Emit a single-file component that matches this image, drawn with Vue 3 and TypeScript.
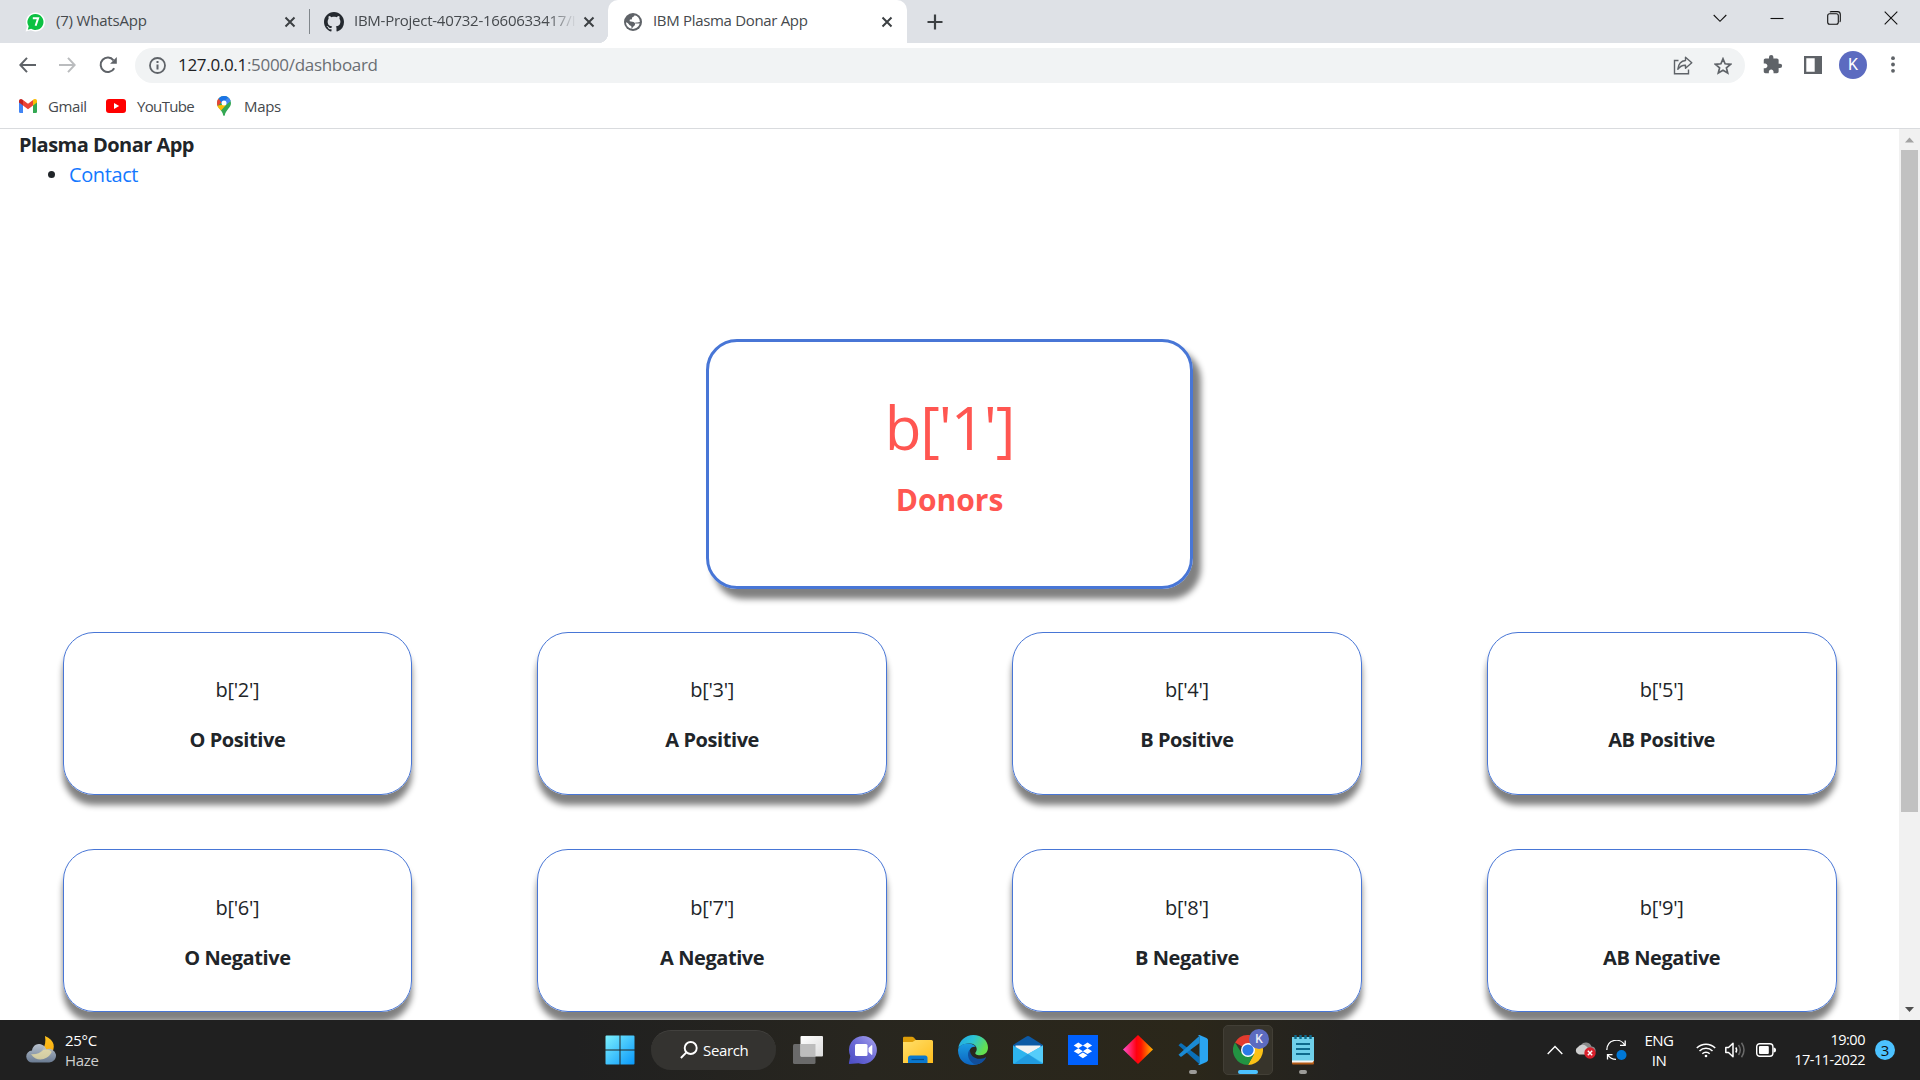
<script setup lang="ts">
interface Group { count: string; label: string }

const groups: Group[] = [
  { count: "b['2']", label: 'O Positive' },
  { count: "b['3']", label: 'A Positive' },
  { count: "b['4']", label: 'B Positive' },
  { count: "b['5']", label: 'AB Positive' },
  { count: "b['6']", label: 'O Negative' },
  { count: "b['7']", label: 'A Negative' },
  { count: "b['8']", label: 'B Negative' },
  { count: "b['9']", label: 'AB Negative' },
]
</script>

<template>
  <div class="screen">
    <header class="tabs">
      <div class="tab tab-a">
        <svg class="fav" width="20" height="20" viewBox="0 0 20 20">
          <path d="M10.5.5a9.5 9.5 0 1 1-4.6 17.8L.6 19.6 2 14.5A9.5 9.5 0 0 1 10.5.5z" fill="#fff" />
          <path d="M10.5 2a8 8 0 1 1-4.4 14.7L2.8 17.700 3.700 14.300A8 8 0 0 1 10.500 2z" fill="#0cc143" />
          <path d="M7.800 6.300h5.300L10.600 13.700" fill="none" stroke="#fff" stroke-width="2" />
        </svg>
        <span class="title">(7) WhatsApp</span>
        <svg class="x" width="12" height="12" viewBox="0 0 12 12"><path d="M1.500 1.500l9 9M10.500 1.500l-9 9" /></svg>
      </div>
      <div class="tab tab-b">
        <svg class="fav" width="20" height="20" viewBox="0 0 16 16">
          <path fill="#24292f" d="M8 0C3.580 0 0 3.580 0 8c0 3.540 2.290 6.530 5.470 7.590.4.070.550-.170.550-.380 0-.190-.010-.820-.010-1.490-2.010.370-2.530-.490-2.690-.940-.090-.230-.480-.940-.820-1.130-.280-.150-.680-.520-.010-.530.630-.010 1.080.580 1.230.820.720 1.210 1.870.870 2.330.660.070-.520.280-.870.510-1.070-1.780-.200-3.640-.890-3.640-3.950 0-.870.310-1.590.820-2.150-.080-.200-.360-1.020.080-2.120 0 0 .670-.210 2.200.820.640-.180 1.320-.270 2-.270s1.360.090 2 .270c1.530-1.040 2.200-.820 2.200-.820.440 1.100.160 1.920.080 2.120.510.560.820 1.270.820 2.150 0 3.070-1.870 3.750-3.650 3.950.290.250.540.730.540 1.480 0 1.070-.010 1.930-.010 2.200 0 .210.150.460.550.380A8.010 8.010 0 0 0 16 8c0-4.420-3.580-8-8-8z" />
        </svg>
        <span class="title fade">IBM-Project-40732-1660633417/I</span>
        <svg class="x" width="12" height="12" viewBox="0 0 12 12"><path d="M1.500 1.500l9 9M10.500 1.500l-9 9" /></svg>
      </div>
      <div class="tab tab-c">
        <svg class="fav" width="18" height="18" viewBox="0 0 18 18">
          <circle cx="9" cy="9" r="9" fill="#5f6368" />
          <path d="M10.500 2.300C10.800 3.800 8 3.600 8 5.200c0 1.300-.9 1.300-2.300 1.500v1.500c1.500.5 3.900 0 4.900 1.500.6 1 1.500.9 2.500.9h2.700A7 7 0 0 1 7.500 15.700V14c0-.9-.6-1.200-1.400-1.500C5 12 4.700 10.300 2.100 9.300v1.200c.3 2.500 2.400 4.700 5.400 5.300C9 15.500 8 14 9.800 13.200c1.300-.6 1.500-2.200 1-3.200C12 9 14.200 9.800 15.900 9 15.800 5.600 13.700 3 10.500 2.300z" fill="#fff" />
        </svg>
        <span class="title">IBM Plasma Donar App</span>
        <svg class="x" width="12" height="12" viewBox="0 0 12 12"><path d="M1.500 1.500l9 9M10.500 1.500l-9 9" /></svg>
      </div>
      <svg class="plus" width="16" height="16" viewBox="0 0 16 16"><path d="M8 .500v15M.500 8h15" stroke="#3c4043" stroke-width="2.200" /></svg>
      <div class="controls">
        <svg width="14" height="14" viewBox="0 0 14 14"><path d="M.700 4l6.300 6.300L13.300 4" /></svg>
        <svg width="14" height="14" viewBox="0 0 14 14"><path d="M.500 7.500h13" /></svg>
        <svg width="14" height="14" viewBox="0 0 14 14"><rect x=".700" y="2.700" width="10.600" height="10.600" rx="2" /><path d="M3 1.200Q3.300.600 4.500.600H10.500Q13.300.600 13.300 3.500V9.500Q13.300 10.700 12.700 11" /></svg>
        <svg width="14" height="14" viewBox="0 0 14 14"><path d="M.700.700l12.600 12.600M13.300.700L.700 13.300" /></svg>
      </div>
    </header>

    <div class="toolbar">
      <svg class="nav back" width="17" height="16" viewBox="0 0 17 16"><path d="M8 .900L1.300 8 8 15.100M1.500 8H17" /></svg>
      <svg class="nav fwd" width="17" height="16" viewBox="0 0 17 16"><path d="M9 .900L15.700 8 9 15.100M15.500 8H0" /></svg>
      <svg class="nav reload" width="18" height="18" viewBox="0 0 18 18"><path d="M15.200 12.200A7.200 7.200 0 1 1 14.500 4.300" /><path d="M17.800 1v6.700h-6.700z" fill="#5f6368" stroke="none" /></svg>
      <div class="omnibox">
        <svg width="17" height="17" viewBox="0 0 17 17"><circle cx="8.500" cy="8.500" r="7.500" fill="none" stroke="#5f6368" stroke-width="1.800" /><path d="M8.500 4v2M8.500 7.500v5" stroke="#5f6368" stroke-width="2" /></svg>
        <span class="url">127.0.0.1<i>:5000/dashboard</i></span>
        <svg class="share" width="20" height="19" viewBox="0 0 20 19" fill="none" stroke="#5f6368" stroke-width="1.400"><path d="M5.500 4.500H1.500V17.800H15.500V13.500" /><path d="M12.500 1.300L18.800 6.700 12.500 12.200V9.200C9.300 9 7 10.200 4.800 13.300 5.300 8.800 7.600 5 12.500 4.500z" stroke-linejoin="round" /></svg>
        <svg class="star" width="18" height="18" viewBox="0 0 18 18"><path d="M9 1.800l2.100 5 5.400.500-4.100 3.500 1.300 5.300L9 13.300l-4.700 2.800 1.300-5.300L1.500 7.300l5.400-.500z" fill="none" stroke="#5f6368" stroke-width="1.700" /></svg>
      </div>
      <svg class="ext" width="21" height="21" viewBox="0 0 24 24"><path fill="#5f6368" d="M20.500 11H19V7c0-1.100-.9-2-2-2h-4V3.500a2.500 2.500 0 0 0-5 0V5H4c-1.100 0-1.990.9-1.990 2v3.800H3.500c1.490 0 2.700 1.210 2.700 2.700s-1.210 2.700-2.700 2.700H2V20c0 1.100.9 2 2 2h3.800v-1.500c0-1.490 1.210-2.700 2.700-2.700s2.700 1.210 2.700 2.700V22H17c1.100 0 2-.9 2-2v-4h1.500a2.500 2.500 0 0 0 0-5z" /></svg>
      <svg class="panel" width="18" height="18" viewBox="0 0 18 18"><path fill="#5f6368" fill-rule="evenodd" d="M0 0h18v18H0zM2.300 2.300v13.400h8.400V2.300z" /></svg>
      <span class="avatar">K</span>
      <svg class="dots" width="4" height="17" viewBox="0 0 4 17" fill="#5f6368"><circle cx="2" cy="2.200" r="1.900" /><circle cx="2" cy="8.500" r="1.900" /><circle cx="2" cy="14.800" r="1.900" /></svg>
    </div>

    <div class="bookmarks">
      <svg width="18" height="14" viewBox="0 0 18 14"><path d="M0 2v10.700Q0 14 1.300 14H4V6z" fill="#4285f4" /><path d="M18 2v10.700Q18 14 16.700 14H14V6z" fill="#34a853" /><path d="M14 1.200V6.500L18 3.500V2C18 0 15.800-.700 14 .800z" fill="#fbbc04" /><path d="M4 6.500V.900L9 4.800 14 .900V6.500L9 10.300z" fill="#ea4335" /><path d="M0 2v1.500L4 6.500V.900C2-.700 0 .200 0 2z" fill="#c5221f" /></svg>
      <span class="gmail">Gmail</span>
      <svg class="yt" width="20" height="14" viewBox="0 0 20 14"><rect width="20" height="14" rx="3" fill="#f00" /><path d="M8 4v6l5.200-3z" fill="#fff" /></svg>
      <span class="youtube">YouTube</span>
      <svg class="mp" width="14" height="20" viewBox="0 0 14 20">
        <path d="M7 0a7 7 0 0 1 7 7c0 5-5.200 6.500-6.200 12.300q-.8 1.400-1.600 0C5.300 13.500 0 12 0 7a7 7 0 0 1 7-7z" fill="#34a853" />
        <path d="M.200 9.500L9.500 8.500 4 14.500C2.300 12.700.600 11.300.200 9.500z" fill="#fbbc04" /><path d="M1.600 2.500L5 6 .600 10C-.300 7.500-.200 4.500 1.600 2.500z" fill="#ea4335" /><path d="M1.600 2.500C4-.500 8.500-.700 11.300 1.500L5 7.500z" fill="#1a73e8" /><path d="M11.300 1.500Q13 2.800 13.700 5L9 9 6.800 5.500z" fill="#4285f4" /><circle cx="7" cy="7" r="2.500" fill="#fff" />
      </svg>
      <span class="maps">Maps</span>
    </div>

    <div class="viewport">
      <main class="page">
        <div class="brand"><b>Plasma Donar App</b></div>
        <ul class="links"><li><a>Contact</a></li></ul>
        <section class="donors">
          <div class="big">b['1']</div>
          <b>Donors</b>
        </section>
        <section class="grid">
          <div v-for="g in groups" :key="g.label" class="cell">
            <div class="card"><p>{{ g.count }}</p><p><b>{{ g.label }}</b></p></div>
          </div>
        </section>
      </main>
      <div class="scroll">
        <svg width="21" height="21" viewBox="0 0 21 21"><path d="M6 13.500l4.500-5 4.500 5z" fill="#a3a3a3" /></svg>
        <div class="thumb"></div>
        <svg class="down" width="21" height="21" viewBox="0 0 21 21"><path d="M6 8l4.500 5L15 8z" fill="#505050" /></svg>
      </div>
    </div>

    <footer class="taskbar">
      <div class="weather">
        <svg width="30" height="28" viewBox="0 0 30 28">
          <defs><linearGradient id="cl" x1="0" y1="0" x2="0" y2="1"><stop offset="0" stop-color="#c3cedb" /><stop offset="1" stop-color="#71839c" /></linearGradient><linearGradient id="mn" x1="0" y1="0" x2="0" y2="1"><stop offset="0" stop-color="#ffc31e" /><stop offset="1" stop-color="#f5a30a" /></linearGradient></defs>
          <path d="M19 0c10 4 11 12 5.500 18.500C20 24 11 24 6 18c9 1 15-7 13-18z" fill="url(#mn)" />
          <path d="M6.500 26.500a6 6 0 0 1-.5-12 7 7 0 0 1 10.500-5.500c2 1 3.300 2.600 3.900 4.500A6.800 6.800 0 1 1 23 26.500z" fill="url(#cl)" opacity=".92" />
          <path d="M5 18c4 .800 9-.500 12.500-4.300 4.500-1 7.500.800 8 2.300C22 24.500 10 26.500 5 18z" fill="#efe2a4" opacity=".7" />
        </svg>
        <div class="two"><span>25°C</span><span class="haze">Haze</span></div>
      </div>
      <div class="apps">
        <span class="tile"><svg width="30" height="30" viewBox="0 0 30 30"><defs><linearGradient id="wn" x1="0" y1="0" x2="1" y2="1"><stop offset="0" stop-color="#7cf0fd" /><stop offset="1" stop-color="#0998fb" /></linearGradient></defs><path d="M.500 1.500q0-1 1-1H14.500v14H.500zM15.500.500h13q1 0 1 1v13h-14zM.500 15.500h14v14h-13q-1 0-1-1zM15.500 15.500h14v13q0 1-1 1h-13z" fill="url(#wn)" /></svg></span>
        <span class="search"><svg width="18" height="18" viewBox="0 0 18 18" fill="none" stroke="#fff" stroke-width="1.900"><circle cx="10.700" cy="7" r="6" /><path d="M6.400 11.300L.900 17" /></svg><span>Search</span></span>
        <span class="tile"><svg width="30" height="28" viewBox="0 0 30 28"><defs><linearGradient id="tv" x1="0" y1="0" x2="1" y2="1"><stop offset="0" stop-color="#fff" /><stop offset="1" stop-color="#dcdcdc" /></linearGradient></defs><rect y="8" width="22.500" height="20" rx="1.500" fill="#6a6a6a" /><rect x="7.500" width="22.500" height="20.500" rx="1" fill="url(#tv)" /><path d="M7.500 8h15v12.500h-15z" fill="#bdbdbd" /></svg></span>
        <span class="tile"><svg width="30" height="30" viewBox="0 0 30 30"><defs><linearGradient id="ch" x1="0" y1="1" x2="1" y2="0"><stop offset="0" stop-color="#4a4cc4" /><stop offset=".5" stop-color="#6d6bd6" /><stop offset="1" stop-color="#a9a4ef" /></linearGradient></defs><path d="M15 1a14 14 0 1 1-4.500 27.300L1.500 29q-.8 0-.6-1L2.300 21A14 14 0 0 1 15 1z" fill="url(#ch)" /><rect x="7" y="9" width="12.500" height="12" rx="1.500" fill="#fff" /><path d="M20.500 13l3-2.800q.8-.5.8.500v8.600q0 1-.8.500l-3-2.800z" fill="#fff" /></svg></span>
        <span class="tile"><svg width="30" height="28" viewBox="0 0 30 28"><defs><linearGradient id="fo" x1="0" y1="0" x2="1" y2="1"><stop offset="0" stop-color="#ffdf6b" /><stop offset="1" stop-color="#ffbd1c" /></linearGradient></defs><path d="M0 2Q0 .800 1.200.800H9q1 0 1.700.700L13 4v5H0z" fill="#dd9d08" /><path d="M0 6h9.500L12.500 4H28.500Q30 4 30 5.500V27H0z" fill="url(#fo)" /><path d="M5 27V22q0-2.500 2.500-2.500h14.500q2.500 0 2.500 2.500v5z" fill="#0a78cf" /><path d="M8.500 23.500h12.500" stroke="#064b86" stroke-width="1.200" /></svg></span>
        <span class="tile"><svg width="30" height="30" viewBox="0 0 30 30"><defs><linearGradient id="e1" x1="0" y1="0" x2="1" y2=".4"><stop offset="0" stop-color="#1fa5e6" /><stop offset=".5" stop-color="#2cc3d5" /><stop offset="1" stop-color="#64e04f" /></linearGradient><linearGradient id="e2" x1="0" y1="0" x2="0" y2="1"><stop offset="0" stop-color="#1b9de2" /><stop offset="1" stop-color="#0d64c0" /></linearGradient></defs><path d="M.300 13C1.500 5.500 7.500 0 15.300 0 24 0 30 5.800 30 12.500c0 5-3.500 7.700-7.800 7.700-4 0-5.900-1.500-4.500-3 2.500-3 .6-8.700-5.700-8.700C6.500 8.500 2 10.500.300 13z" fill="url(#e1)" /><path d="M0 15C.500 11 5 8.500 10 8.500c3.800 0 6.500 1.300 7.800 3.500-6.500-1.500-8 6.500-4.800 10.500 3 4 8 5.500 12.500 3.500C16.500 33.500 0 30.500 0 15z" fill="url(#e2)" /><path d="M12 14.500c-4 3.500-2 13.500 6.500 15.100 4.500-.8 7.700-3.500 9.400-6.600.3-.6-.1-1-.7-.6-7.800 4-15.700-.9-15.200-7.900z" fill="#114e9b" /></svg></span>
        <span class="tile"><svg width="30" height="28" viewBox="0 0 30 28"><path d="M0 9L13.500.500q1.500-.8 3 0L30 9v4H0z" fill="#0c59a4" /><path d="M2.500 9.500h25V16L15 24 2.500 16z" fill="#f2f2f2" /><path d="M0 9.500L15 18 30 9.500V27q0 1-1 1H1q-1 0-1-1z" fill="#2db4ee" /><path d="M30 9.500V27L15 18z" fill="#55cdfa" /><path d="M.500 28L15 18l14.500 10z" fill="#1787d6" opacity=".55" /></svg></span>
        <span class="tile"><svg width="30" height="30" viewBox="0 0 30 30"><path d="M0 0h30v30H0z" fill="#0061fe" /><path d="M10.300 7.500l4.600 2.900-4.600 2.900-4.600-2.900zM19.500 7.500l4.600 2.900-4.600 2.900-4.600-2.900zM10.300 13.300l4.600 2.900-4.600 2.900-4.600-2.900zM19.500 13.300l4.600 2.900-4.600 2.900-4.600-2.900zM14.900 17.400l4.600 2.900-4.600 2.900-4.600-2.900z" fill="#fff" /></svg></span>
        <span class="tile"><svg width="30" height="30" viewBox="0 0 30 30"><defs><linearGradient id="di"><stop offset="0" stop-color="#ff4fd0" /><stop offset=".45" stop-color="#ff0010" /><stop offset=".6" stop-color="#ff1500" /><stop offset="1" stop-color="#ffb400" /></linearGradient></defs><path d="M15 0l15 14.500L15 29 0 14.500z" fill="url(#di)" /></svg></span>
        <span class="tile"><svg width="30" height="30" viewBox="0 0 30 30"><path d="M.500 10.200L2.300 8.600q.7-.5 1.400 0L21.500 22v7.200z" fill="#0a6fb8" /><path d="M.500 19.800l1.800 1.600q.7.500 1.400 0L21.500 8V.800L.500 19.800z" fill="#1a8ad4" /><path d="M21.500 0l7 3q1.500.800 1.500 2v20q0 1.200-1.500 2l-7 3q-1 0-1.700-.8.900.5 1.700-.7V1.500Q21 .300 19.800.800 20.500 0 21.500 0z" fill="#2aa5f2" /></svg><i class="run"></i></span>
        <span class="tile on"><svg width="30" height="30" viewBox="0 0 30 30"><path d="M15 15L2 7.500A15 15 0 0 1 28 7.500z" fill="#e33b2e" /><path d="M15 8H28.300A15 15 0 0 1 15 30l6-11z" fill="#fbc116" /><path d="M8.900 18.500L2 7.500A15 15 0 0 0 15 30l6.100-11z" fill="#229342" /><circle cx="15" cy="15" r="7" fill="#fff" /><circle cx="15" cy="15" r="5.600" fill="#2c7be8" /></svg><em class="kb">K</em><i class="run act"></i></span>
        <span class="tile"><svg width="22" height="30" viewBox="0 0 22 30"><path d="M0 2h22v24H0z" fill="#6fd0ea" /><path d="M0 26h22v2.500q0 1-1 1H1q-1 0-1-1z" fill="#b35a16" /><path d="M0 25.500h22l-1.500 2H0z" fill="#f5f5f5" /><path d="M4 9h14M4 14h14M4 19h14" stroke="#0e6a8c" stroke-width="1.800" /><path d="M3.500 0v4M8.500 0v4M13.500 0v4M18.500 0v4" stroke="#0e6a8c" stroke-width="2.400" /></svg><i class="run"></i></span>
      </div>
      <div class="tray">
        <svg width="16" height="10" viewBox="0 0 16 10"><path d="M.700 9L8 1.500 15.300 9" fill="none" stroke="#fff" stroke-width="1.400" /></svg>
        <svg class="od" width="21" height="18" viewBox="0 0 21 18"><path d="M6 4A6 6 0 0 1 16.500 5.500 4 4 0 0 1 18.500 13H8z" fill="#8a8a8a" /><path d="M4 13.500A4 4 0 0 1 3 6 5.500 5.500 0 0 1 11 5l4.500 4.500V13.500z" fill="#cfcfcf" /><circle cx="15" cy="12" r="5.700" fill="#d9202c" /><path d="M12.800 9.800l4.400 4.400M17.200 9.800l-4.400 4.400" stroke="#fff" stroke-width="1.400" /></svg>
        <svg class="sy" width="21" height="21" viewBox="0 0 21 21" fill="none" stroke="#fff" stroke-width="1.300"><path d="M.800 10C1.200-1.200 14.500-2.500 18.700 5M19.200.500V5.300H14M10 19.400C6.500 19.400 3.600 17.800 1.900 15M6.500 14.700H1.500V19.500" /><circle cx="15.500" cy="15" r="5" fill="#0078d7" stroke="none" /></svg>
        <div class="two lang"><span>ENG</span><span>IN</span></div>
        <svg class="wf" width="20" height="16" viewBox="0 0 20 16" fill="none" stroke="#fff" stroke-width="1.500"><path d="M.800 6A13 13 0 0 1 19.200 6M3.500 9A9.200 9.200 0 0 1 16.500 9M6.300 11.800A5.300 5.300 0 0 1 13.700 11.800" /><circle cx="10" cy="14" r="1.300" fill="#fff" stroke="none" /></svg>
        <svg class="sp" width="21" height="16" viewBox="0 0 21 16" fill="none" stroke="#fff" stroke-width="1.500"><path d="M.800 5.500H3.500L8 1.300V14.700L3.500 10.500H.800z" stroke-linejoin="round" /><path d="M10.800 5.500Q12.500 8 10.800 10.500" /><path d="M13.500 3Q17 8 13.500 13M16.500.800Q21.500 8 16.500 15.200" stroke="#6a6a6a" /></svg>
        <svg class="bt" width="20" height="14" viewBox="0 0 20 14"><rect x=".700" y=".700" width="16.200" height="12.600" rx="3" fill="none" stroke="#fff" stroke-width="1.400" /><rect x="3" y="3" width="9.800" height="8" rx="1" fill="#fff" /><path d="M17.500 4.500q2.500 0 2.500 2.500t-2.500 2.500z" fill="#fff" /></svg>
        <div class="two clock"><span>19:00</span><span>17-11-2022</span></div>
        <span class="notif">3</span>
      </div>
    </footer>
  </div>
</template>

<style>
html, body { margin: 0; overflow: hidden; }
</style>

<style scoped>
.screen { width: 1920px; height: 1080px; display: flex; flex-direction: column; background: #fff; overflow: hidden; font-family: "Open Sans", "Noto Sans", sans-serif; color: #212529; }
.screen * { box-sizing: border-box; }
svg { display: block; flex: none; }
i, em { font-style: normal; }
.tabs { height: 43px; display: flex; align-items: center; background: #dee1e6; flex: none; color: #45494d; font-size: 15px; }
.tab { display: flex; align-items: center; height: 43px; flex: none; }
.tab-a { width: 310px; padding-left: 25px; background: linear-gradient(#80868b, #80868b) right 0 top 9px / 1px 25px no-repeat; }
.tab-b { width: 298px; padding-left: 14px; background: radial-gradient(circle at 0 0, transparent 10px, #fff 10.500px) right bottom / 10px 10px no-repeat; }
.tab-c { width: 299px; padding-left: 16px; background: #fff; border-radius: 10px 10px 0 0; }
.title { white-space: nowrap; line-height: 20px; padding-bottom: 3px; }
.tab-a .title { margin-left: 11px; width: 228px; letter-spacing: -.2px; }
.tab-b .title { margin-left: 10px; width: 223px; letter-spacing: -.26px; }
.tab-c .title { margin-left: 11px; width: 228px; letter-spacing: -.32px; }
.fade { -webkit-mask-image: linear-gradient(90deg, #000 86%, transparent); mask-image: linear-gradient(90deg, #000 86%, transparent); }
.x { fill: none; stroke: #3c4043; stroke-width: 2; }
.tab-b .x { margin-left: 6px; }
.plus { margin-left: 0; padding: 0; }
.tabs::after { content: none; }
.tab-c + .plus { margin-left: 20px; }
.controls { margin-left: auto; padding: 0 22px 7px 0; display: flex; gap: 43px; }
.controls svg { fill: none; stroke: #111; stroke-width: 1.100; }
.toolbar { height: 43px; flex: none; display: flex; align-items: center; }
.nav { fill: none; stroke: #5f6368; stroke-width: 2; }
.back { margin-left: 19px; }
.fwd { margin-left: 23px; stroke: #babcbe; }
.reload { margin-left: 23px; }
.omnibox { margin-left: 18px; width: 1610px; height: 35px; margin-top: 2px; border-radius: 18px; background: #f1f3f4; display: flex; align-items: center; padding-left: 14px; }
.url { margin-left: 12px; font-size: 17px; letter-spacing: -.31px; line-height: 30px; padding-bottom: 2px; color: #202124; white-space: nowrap; }
.url i { color: #6a6e73; }
.share { margin-left: auto; }
.star { margin: 0 13px 0 21px; }
.ext { margin-left: 17px; }
.panel { margin-left: 21px; }
.avatar { margin-left: 17px; width: 28px; height: 28px; border-radius: 50%; background: #5c6bc0; color: #fff; font: 16px/28px Roboto, sans-serif; text-align: center; }
.dots { margin-left: 24px; }
.bookmarks { height: 42px; flex: none; display: flex; align-items: center; padding: 0 0 2px 19px; font-size: 15px; line-height: 20px; color: #45494d; }
.bookmarks span { padding-bottom: 1px; }
.gmail { margin-left: 11px; width: 38px; letter-spacing: -.4px; }
.youtube { margin-left: 11px; width: 57px; letter-spacing: -.65px; }
.maps { margin-left: 13px; letter-spacing: -.3px; }
.yt { margin-left: 20px; }
.mp { margin-left: 23px; }
.viewport { height: 892px; flex: none; display: flex; border-top: 1px solid #d9dbde; overflow: hidden; }
.page { width: 1899px; padding-top: 1px; font-size: 20px; line-height: 30px; }
.brand { padding-left: 19px; height: 30px; letter-spacing: -.53px; }
.links { margin: 0; padding: 0 0 0 69px; }
.links a { color: #1479ff; letter-spacing: -.4px; }
.donors { width: 487px; height: 250px; margin: 149px auto 0; border: 3px solid #4876d6; border-radius: 31px; box-shadow: 7.500px 10px 6.250px gray; color: #ff5651; text-align: center; padding-top: 40px; }
.big { font-size: 60px; line-height: 90px; letter-spacing: -1.200px; }
.donors b { display: block; font-size: 30px; line-height: 45px; margin-top: 5px; }
.grid { display: grid; grid-template-columns: repeat(4, 1fr); row-gap: 54.900px; margin-top: 43px; }
.cell { padding: 0 62.500px; }
.card { height: 162.500px; border: 1px solid #4876d6; border-radius: 31px; box-shadow: 0 10px 6.250px gray; text-align: center; padding-top: 42.200px; letter-spacing: -.3px; }
.card p { margin: 0 0 20px; }
.card b { letter-spacing: -.42px; }
.scroll { width: 21px; background: #f1f1f1; display: flex; flex-direction: column; align-items: center; }
.thumb { width: 17px; height: 662px; background: #c1c1c1; }
.down { margin-top: auto; }
.taskbar { height: 60px; flex: none; position: relative; display: flex; align-items: center; color: #fff; font-size: 15px; line-height: 20px; background: linear-gradient(90deg, #202020 30%, #28261f 45%, #2b271a 62%, #232220 70%, #202020 78%); }
.two { display: flex; flex-direction: column; }
.weather { display: flex; align-items: center; padding-left: 26px; width: 595px; }
.weather .two { margin-left: 9px; letter-spacing: -.3px; }
.haze { color: #cfcfcf; }
.apps { display: flex; align-items: center; gap: 5px; }
.tile { width: 50px; height: 50px; display: flex; align-items: center; justify-content: center; position: relative; border-radius: 5px; }
.search { width: 125px; height: 40px; border-radius: 20px; background: #343330; border-top: 1px solid #42413e; margin: 0 2px 0 1px; display: flex; align-items: center; padding: 0 0 1px 29px; gap: 5px; letter-spacing: -.35px; }
.search span { padding-bottom: 1px; }
.on { background: #37342b; border: 1px solid #423f36; }
.run { position: absolute; left: 21px; bottom: 1px; width: 8px; height: 4px; border-radius: 2px; background: #9c9b98; }
.on .run { left: 14px; bottom: 0; width: 20px; background: #4cc2ff; }
.kb { position: absolute; left: 25px; top: 3px; width: 20px; height: 20px; border-radius: 50%; background: #5c6bc0; font: 500 12px/20px Roboto, sans-serif; text-align: center; color: #e8eaf6; }
.tray { margin-left: auto; display: flex; align-items: center; padding-right: 25px; }
.od { margin-left: 12px; }
.sy { margin-left: 10px; }
.lang { width: 40px; margin-left: 12px; text-align: center; letter-spacing: -.5px; }
.wf { margin-left: 17px; }
.sp { margin-left: 9px; }
.bt { margin-left: 10px; }
.clock { width: 80px; margin-left: 9px; text-align: right; font-size: 14.500px; letter-spacing: -.48px; }
.notif { margin-left: 10px; width: 20px; height: 20px; border-radius: 50%; background: #4cc2ff; color: #111; text-align: center; }
</style>
